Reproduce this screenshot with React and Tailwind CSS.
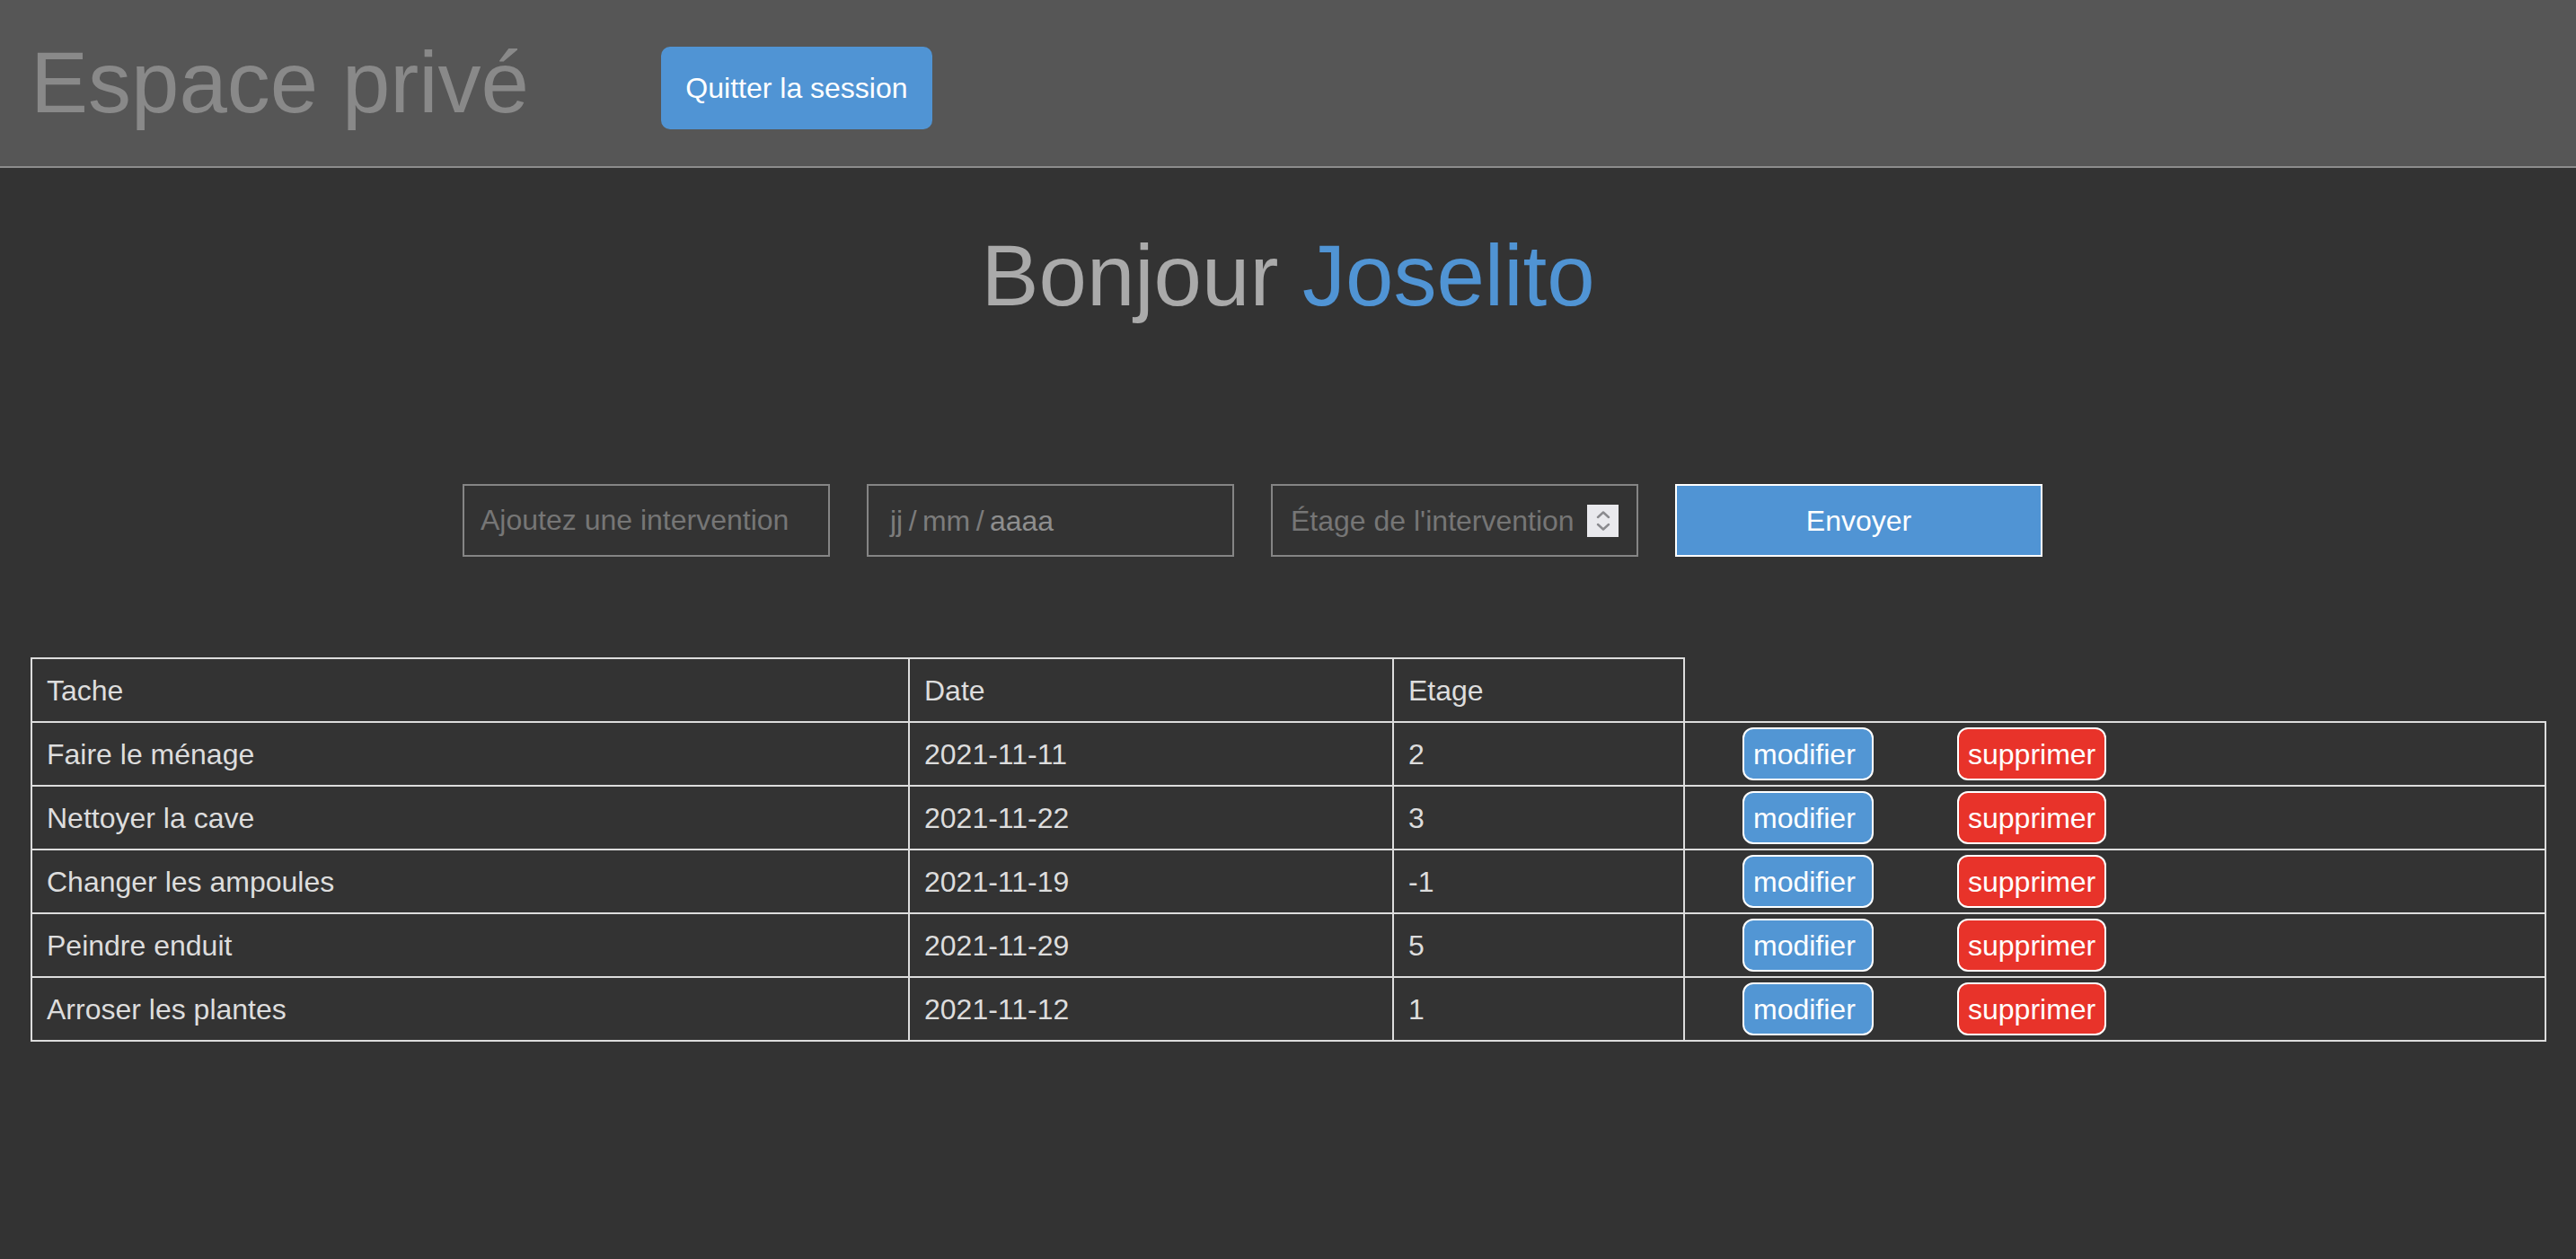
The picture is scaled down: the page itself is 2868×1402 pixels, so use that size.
const taches = [
  { nom: "Faire le ménage", date: "2021-11-11", etage: "2" },
  { nom: "Nettoyer la cave", date: "2021-11-22", etage: "3" },
  { nom: "Changer les ampoules", date: "2021-11-19", etage: "-1" },
  { nom: "Peindre enduit", date: "2021-11-29", etage: "5" },
  { nom: "Arroser les plantes", date: "2021-11-12", etage: "1" },
];

function Spinner() {
  return (
    <div className="flex h-[36px] w-[35px] flex-col items-center justify-center gap-[4px] bg-[#e9e9ed]">
      <svg width="16" height="10" viewBox="0 0 16 10" fill="none">
        <path d="M2 8 L8 2.5 L14 8" stroke="#8a8a8e" strokeWidth="2.4" strokeLinecap="round" strokeLinejoin="round" />
      </svg>
      <svg width="16" height="10" viewBox="0 0 16 10" fill="none">
        <path d="M2 2 L8 7.5 L14 2" stroke="#8a8a8e" strokeWidth="2.4" strokeLinecap="round" strokeLinejoin="round" />
      </svg>
    </div>
  );
}

export default function App() {
  return (
    <div className="min-h-screen bg-[#333333] font-['Liberation_Sans',Arial,sans-serif]">
      {/* en-tête */}
      <header className="flex h-[187px] items-start border-b-2 border-[#8c8c8c] bg-[#565656] pl-[34px]">
        <h2 className="mt-[44px] text-[96px] leading-none text-[#898989]">Espace privé</h2>
        <button className="ml-[147px] mt-[52px] h-[92px] w-[302px] rounded-[10px] bg-[#5094d4] text-[32px] text-white">
          Quitter la session
        </button>
      </header>

      <h1 className="mt-[72px] text-center text-[96px] leading-none text-[#aaaaaa]">
        Bonjour <span className="text-[#5094d4]">Joselito</span>
      </h1>

      {/* formulaire */}
      <form className="mt-[184px] flex justify-center gap-[41px] pr-[79px]">
        <input
          type="text"
          placeholder="Ajoutez une intervention"
          className="h-[81px] w-[409px] border-2 border-[#858585] bg-transparent pl-[18px] text-[32px] text-[#dddddd] outline-none placeholder:text-[#767676]"
        />
        <div className="flex h-[81px] w-[409px] items-center border-2 border-[#858585] pl-[24px] text-[32px] text-[#7c7c7c]">
          jj{"\u2009"}/{"\u2009"}mm{"\u2009"}/{"\u2009"}
          <span className="text-[#8e8e8e]">aaaa</span>
        </div>
        <div className="flex h-[81px] w-[409px] items-center justify-between border-2 border-[#858585] pl-[20px] pr-[20px] text-[32px] text-[#767676]">
          <span>Étage de l'intervention</span>
          <Spinner />
        </div>
        <button
          type="button"
          className="h-[81px] w-[409px] border-2 border-white bg-[#5094d4] text-[32px] text-white"
        >
          Envoyer
        </button>
      </form>

      {/* liste des interventions */}
      <table className="ml-[34px] mt-[112px] w-[2799px] table-fixed border-collapse text-[32px] text-[#dddddd]">
        <colgroup>
          <col className="w-[977px]" />
          <col className="w-[539px]" />
          <col className="w-[324px]" />
          <col className="w-[959px]" />
        </colgroup>
        <thead>
          <tr className="h-[71px]">
            <th className="border-2 border-[#dddddd] pl-[16px] text-left font-normal">Tache</th>
            <th className="border-2 border-[#dddddd] pl-[16px] text-left font-normal">Date</th>
            <th className="border-2 border-[#dddddd] pl-[16px] text-left font-normal">Etage</th>
          </tr>
        </thead>
        <tbody>
          {taches.map((t) => (
            <tr key={t.nom} className="h-[71px]">
              <td className="border-2 border-[#dddddd] pl-[16px]">{t.nom}</td>
              <td className="border-2 border-[#dddddd] pl-[16px]">{t.date}</td>
              <td className="border-2 border-[#dddddd] pl-[16px]">{t.etage}</td>
              <td className="border-2 border-[#dddddd] pl-[64px]">
                <div className="flex items-center gap-[93px]">
                  <button className="h-[59px] w-[146px] rounded-[12px] border-2 border-white bg-[#5296d4] pl-[10px] text-left text-[32px] text-white">
                    modifier
                  </button>
                  <button className="h-[59px] w-[166px] rounded-[12px] border-2 border-white bg-[#e8332a] pl-[10px] text-left text-[32px] text-white">
                    supprimer
                  </button>
                </div>
              </td>
            </tr>
          ))}
        </tbody>
      </table>
    </div>
  );
}
